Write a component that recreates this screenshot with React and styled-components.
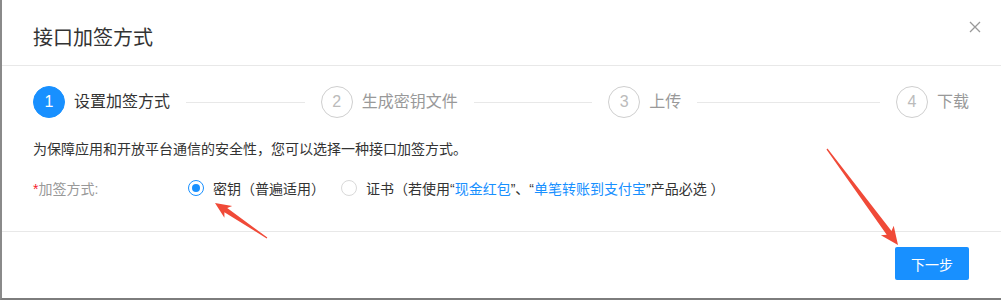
import React from 'react'
import styled, { createGlobalStyle } from 'styled-components'

const GlobalStyle = createGlobalStyle`
  html, body {
    margin: 0;
    padding: 0;
    background: #fff;
    overflow: hidden;
  }
  body {
    font-family: "Liberation Sans", "Noto Sans CJK SC", sans-serif;
    color: #333;
  }
`

const steps = ['设置加签方式', '生成密钥文件', '上传', '下载']

const Modal = () => (
  <Wrapper>
    <Header>
      <Title>接口加签方式</Title>
      <Close aria-label="close">
        <svg width="12" height="12" viewBox="0 0 12 12">
          <path d="M1 1 L11 11 M11 1 L1 11" stroke="#999" strokeWidth="1.3" fill="none" />
        </svg>
      </Close>
    </Header>

    <Body>
      <Steps>
        {steps.map((s, i) => {
          const active = i === 0
          const last = i === steps.length - 1
          return (
            <StepItem key={s} $last={last}>
              <StepIcon $active={active}>{i + 1}</StepIcon>
              <StepTitle $active={active}>{s}</StepTitle>
              {!last && <StepTail />}
            </StepItem>
          )
        })}
      </Steps>

      <Desc>为保障应用和开放平台通信的安全性，您可以选择一种接口加签方式。</Desc>

      <FormRow>
        <Label>
          <Required>*</Required>加签方式:
        </Label>
        <RadioGroup>
          <RadioOption>
            <RadioDot $checked />
            <span>密钥（普遍适用）</span>
          </RadioOption>
          <RadioOption>
            <RadioDot />
            <span>
              证书（若使用“<Link>现金红包</Link>”、“<Link>单笔转账到支付宝</Link>”产品必选 ）
            </span>
          </RadioOption>
        </RadioGroup>
      </FormRow>
    </Body>

    <Footer>
      <PrimaryButton>下一步</PrimaryButton>
    </Footer>

    <Annotations width="1001" height="300" viewBox="0 0 1001 300">
      {/* arrow pointing at the first radio */}
      <polygon
        fill="#f04a38"
        points="265.3,237.6 225.2,208.1 230.2,206.1 213,203 222.4,217.7 222.4,212.3 264.7,238.4"
      />
      {/* arrow pointing at the next button */}
      <polygon
        fill="#f04a38"
        points="825.5,148.6 889.5,231.1 891.7,225.7 896,245 878.9,235.3 884.7,234.7 824.5,149.4"
      />
    </Annotations>
  </Wrapper>
)

export default function App() {
  return (
    <>
      <GlobalStyle />
      <Modal />
    </>
  )
}

const Wrapper = styled.div`
  position: relative;
  width: 1001px;
  height: 300px;
  box-sizing: border-box;
  border-left: 2px solid #8a8a8a;
  border-bottom: 2px solid #7d7d7d;
  background: #fff;
  display: flex;
  flex-direction: column;
`

const Header = styled.div`
  position: relative;
  height: 66px;
  box-sizing: border-box;
  padding: 24px 32px 0 31px;
  border-bottom: 1px solid #e8e8e8;
`

const Title = styled.div`
  font-size: 20px;
  line-height: 28px;
  color: #333;
`

const Close = styled.span`
  position: absolute;
  top: 21px;
  right: 20px;
  width: 12px;
  height: 12px;
  display: block;
  svg {
    display: block;
  }
`

const Body = styled.div`
  height: 165px;
  box-sizing: border-box;
  padding: 20px 32px 0 31px;
`

const Steps = styled.div`
  display: flex;
  align-items: center;
  height: 32px;
`

const StepItem = styled.div`
  flex: ${p => (p.$last ? 'none' : 1)};
  display: flex;
  align-items: center;
`

const StepIcon = styled.span`
  width: 32px;
  height: 32px;
  box-sizing: border-box;
  border-radius: 50%;
  border: 1px solid ${p => (p.$active ? '#1890ff' : '#cfcfcf')};
  background: ${p => (p.$active ? '#1890ff' : '#fff')};
  color: ${p => (p.$active ? '#fff' : '#bbb')};
  font-size: 16px;
  display: flex;
  align-items: center;
  justify-content: center;
  flex: none;
`

const StepTitle = styled.span`
  margin-left: 9px;
  font-size: 16px;
  line-height: 24px;
  color: ${p => (p.$active ? '#333' : '#999')};
  white-space: nowrap;
`

const StepTail = styled.span`
  flex: 1;
  height: 1px;
  background: #e8e8e8;
  margin: 0 16px;
`

const Desc = styled.div`
  margin-top: 20px;
  font-size: 14px;
  line-height: 22px;
  color: #333;
`

const FormRow = styled.div`
  margin-top: 12px;
  height: 32px;
  display: flex;
  align-items: center;
  font-size: 14px;
`

const Label = styled.div`
  width: 155px;
  color: #999;
  flex: none;
`

const Required = styled.span`
  color: #f5222d;
`

const RadioGroup = styled.div`
  display: flex;
  align-items: center;
  gap: 16px;
`

const RadioOption = styled.label`
  display: flex;
  align-items: center;
  gap: 9px;
  color: #333;
  white-space: nowrap;
`

const RadioDot = styled.span`
  position: relative;
  width: 16px;
  height: 16px;
  box-sizing: border-box;
  border-radius: 50%;
  border: 1px solid ${p => (p.$checked ? '#1890ff' : '#d9d9d9')};
  background: #fff;
  flex: none;

  &::after {
    content: '';
    display: ${p => (p.$checked ? 'block' : 'none')};
    position: absolute;
    top: 3px;
    left: 3px;
    width: 8px;
    height: 8px;
    border-radius: 50%;
    background: #1890ff;
  }
`

const Link = styled.span`
  color: #1890ff;
`

const Footer = styled.div`
  height: 65px;
  box-sizing: border-box;
  border-top: 1px solid #e8e8e8;
  padding: 15px 32px 0 31px;
  display: flex;
  justify-content: flex-end;
  align-items: flex-start;
`

const PrimaryButton = styled.button`
  height: 33px;
  padding: 0 16px;
  border: none;
  border-radius: 2px;
  background: #1890ff;
  color: #fff;
  font-family: "Liberation Sans", "Noto Sans CJK SC", sans-serif;
  font-size: 14px;
  cursor: pointer;
`

const Annotations = styled.svg`
  position: absolute;
  top: 0;
  left: 0;
  pointer-events: none;
`
